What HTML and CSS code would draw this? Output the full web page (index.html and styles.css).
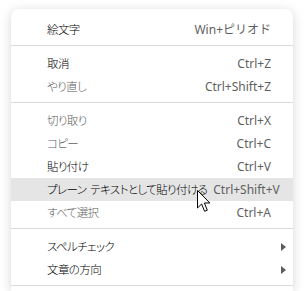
FILE: index.html
```html
<!DOCTYPE html>
<html lang="ja">
<head>
<meta charset="utf-8">
<link rel="stylesheet" href="styles.css">
</head>
<body>
<div class="menu">
  <div class="item"><span class="label">絵文字</span><span class="key">Win+ピリオド</span><span class="sub"></span></div>
  <div class="sep"></div>
  <div class="item"><span class="label">取消</span><span class="key">Ctrl+Z</span><span class="sub"></span></div>
  <div class="item disabled"><span class="label">やり直し</span><span class="key">Ctrl+Shift+Z</span><span class="sub"></span></div>
  <div class="sep"></div>
  <div class="item disabled"><span class="label">切り取り</span><span class="key">Ctrl+X</span><span class="sub"></span></div>
  <div class="item disabled"><span class="label">コピー</span><span class="key">Ctrl+C</span><span class="sub"></span></div>
  <div class="item"><span class="label">貼り付け</span><span class="key">Ctrl+V</span><span class="sub"></span></div>
  <div class="item hover"><span class="label">プレーン テキストとして貼り付ける</span><span class="key">Ctrl+Shift+V</span><span class="sub"></span></div>
  <div class="item disabled"><span class="label">すべて選択</span><span class="key">Ctrl+A</span><span class="sub"></span></div>
  <div class="sep"></div>
  <div class="item"><span class="label">スペルチェック</span><span class="key"></span><span class="sub"><span class="arrow"></span></span></div>
  <div class="item"><span class="label">文章の方向</span><span class="key"></span><span class="sub"><span class="arrow"></span></span></div>
  <div class="sep"></div>
</div>
<svg class="cursor" width="14" height="23" viewBox="0 0 14 23">
  <path d="M0.5 0.5 L0.5 18 L4.6 14 L7.6 21.3 L10.3 20.2 L7.4 13 L12.9 13 Z" fill="#fff" stroke="#000" stroke-width="1" stroke-linejoin="miter"/>
</svg>
</body>
</html>
```

FILE: styles.css
```css
html, body {
  margin: 0;
  padding: 0;
  background: #ffffff;
  width: 305px;
  height: 291px;
  overflow: hidden;
}
body {
  position: relative;
  font-family: "Noto Sans", "Noto Sans CJK JP", sans-serif;
  font-size: 12px;
}
.menu {
  margin: 9px 0 0 11px;
  width: 282px;
  height: 282px;
  overflow: hidden;
  background: #ffffff;
  border-radius: 8px 8px 0 0;
  box-shadow: 0 2px 12px rgba(0, 0, 0, 0.16);
  padding-top: 9px;
  box-sizing: border-box;
}
.item {
  display: flex;
  align-items: center;
  height: 23px;
  padding: 0 7px 0 36px;
  white-space: nowrap;
  color: #000000;
}
.item.hover {
  background: #e5e5e5;
}
.label {
  flex: 1;
  font-family: "Noto Sans CJK JP", sans-serif;
  font-feature-settings: "palt";
  font-weight: 300;
  font-size: 11.5px;
  letter-spacing: -0.6px;
  word-spacing: 2px;
  line-height: 23px;
}
.key {
  color: #5f5f5f;
  line-height: 23px;
  padding-left: 6px;
}
.key:empty { display: none; }
.item.disabled .label {
  color: #5e5e5e;
}
.sub {
  width: 15px;
  display: flex;
  justify-content: flex-end;
  align-items: center;
}
.arrow {
  width: 0;
  height: 0;
  border-top: 4px solid transparent;
  border-bottom: 4px solid transparent;
  border-left: 5px solid #5c5c5c;
}
.sep {
  height: 1px;
  background: #dadada;
  margin: 4px 0 6px;
}
.cursor {
  position: absolute;
  left: 197px;
  top: 190px;
}
```
